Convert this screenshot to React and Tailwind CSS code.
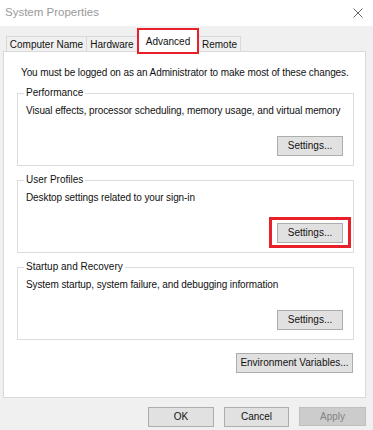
const font = { fontFamily: '"Liberation Sans", Arial, sans-serif' };

function Btn({ children, className = "" }) {
  return (
    <button
      type="button"
      className={`h-[20px] border border-[#adadad] bg-[#e1e1e1] text-[10px] leading-none text-[#111] ${className}`}
    >
      {children}
    </button>
  );
}

function Group({ title, text, className = "", marked = false }) {
  return (
    <fieldset
      className={`mx-[13px] mr-[11px] border border-[#dcdcdc] pb-[9px] ${className}`}
    >
      <legend className="ml-[6px] px-[2px] text-[10px] leading-[14px] text-[#111]">
        {title}
      </legend>
      <div className="mt-[4px] whitespace-nowrap pl-[8px] text-[10px] leading-[14px] tracking-[-0.1px] text-[#111]">
        {text}
      </div>
      <div className="mt-[18px] flex justify-end pr-[10px]">
        <div className="relative">
          <Btn className="block w-[66px]">Settings...</Btn>
          {marked && (
            <span className="pointer-events-none absolute -bottom-[5px] -left-[8px] -right-[8px] -top-[6px] border-[3px] border-[#e8202a]" />
          )}
        </div>
      </div>
    </fieldset>
  );
}

export default function App() {
  return (
    <div className="h-[430px] w-[373px] overflow-hidden bg-[#f0f0f0]" style={font}>
      <div className="flex h-[26px] items-center justify-between bg-white pl-[5px] pr-[10px]">
        <span className="text-[11.5px] text-[#9a9a9a]">System Properties</span>
        <svg width="10" height="10" viewBox="0 0 10 10">
          <path d="M0.5 0.5L9.5 9.5M9.5 0.5L0.5 9.5" stroke="#666" strokeWidth="1" />
        </svg>
      </div>

      <div className="flex h-[25px] items-end pl-[6px] text-[10px] text-[#111]">
        <div className="flex h-[15px] w-[80px] items-center justify-center border-l border-t border-[#d9d9d9]">
          Computer Name
        </div>
        <div className="flex h-[15px] w-[51px] items-center justify-center border-l border-t border-[#d9d9d9]">
          Hardware
        </div>
        <div className="relative z-10 -mb-[3px] flex h-[26px] w-[62px] items-start justify-center border-2 border-[#e8202a] bg-white pt-[4px]">
          Advanced
        </div>
        <div className="flex h-[15px] w-[42px] items-center justify-center border-r border-t border-[#d9d9d9]">
          Remote
        </div>
      </div>

      <div className="ml-[3px] flex w-[363px] flex-col border border-[#d9d9d9] bg-white pb-[24px] pt-[14px]">
        <div className="whitespace-nowrap pl-[17px] text-[10px] leading-[14px] tracking-[-0.1px] text-[#111]">
          You must be logged on as an Administrator to make most of these changes.
        </div>
        <Group
          className="mt-[6px]"
          title="Performance"
          text="Visual effects, processor scheduling, memory usage, and virtual memory"
        />
        <Group
          className="mt-[7px]"
          title="User Profiles"
          text="Desktop settings related to your sign-in"
          marked
        />
        <Group
          className="mt-[7px]"
          title="Startup and Recovery"
          text="System startup, system failure, and debugging information"
        />
        <div className="mr-[12px] mt-[13px] flex justify-end">
          <Btn className="w-[117px]">Environment Variables...</Btn>
        </div>
      </div>

      <div className="mt-[9px] flex justify-end gap-[10px] pr-[7px]">
        <Btn className="h-[19px] w-[66px]">OK</Btn>
        <Btn className="h-[19px] w-[65px]">Cancel</Btn>
        <button
          type="button"
          className="h-[19px] w-[67px] border border-[#bfbfbf] bg-[#cccccc] text-[10px] leading-none text-[#838383]"
        >
          Apply
        </button>
      </div>
    </div>
  );
}
